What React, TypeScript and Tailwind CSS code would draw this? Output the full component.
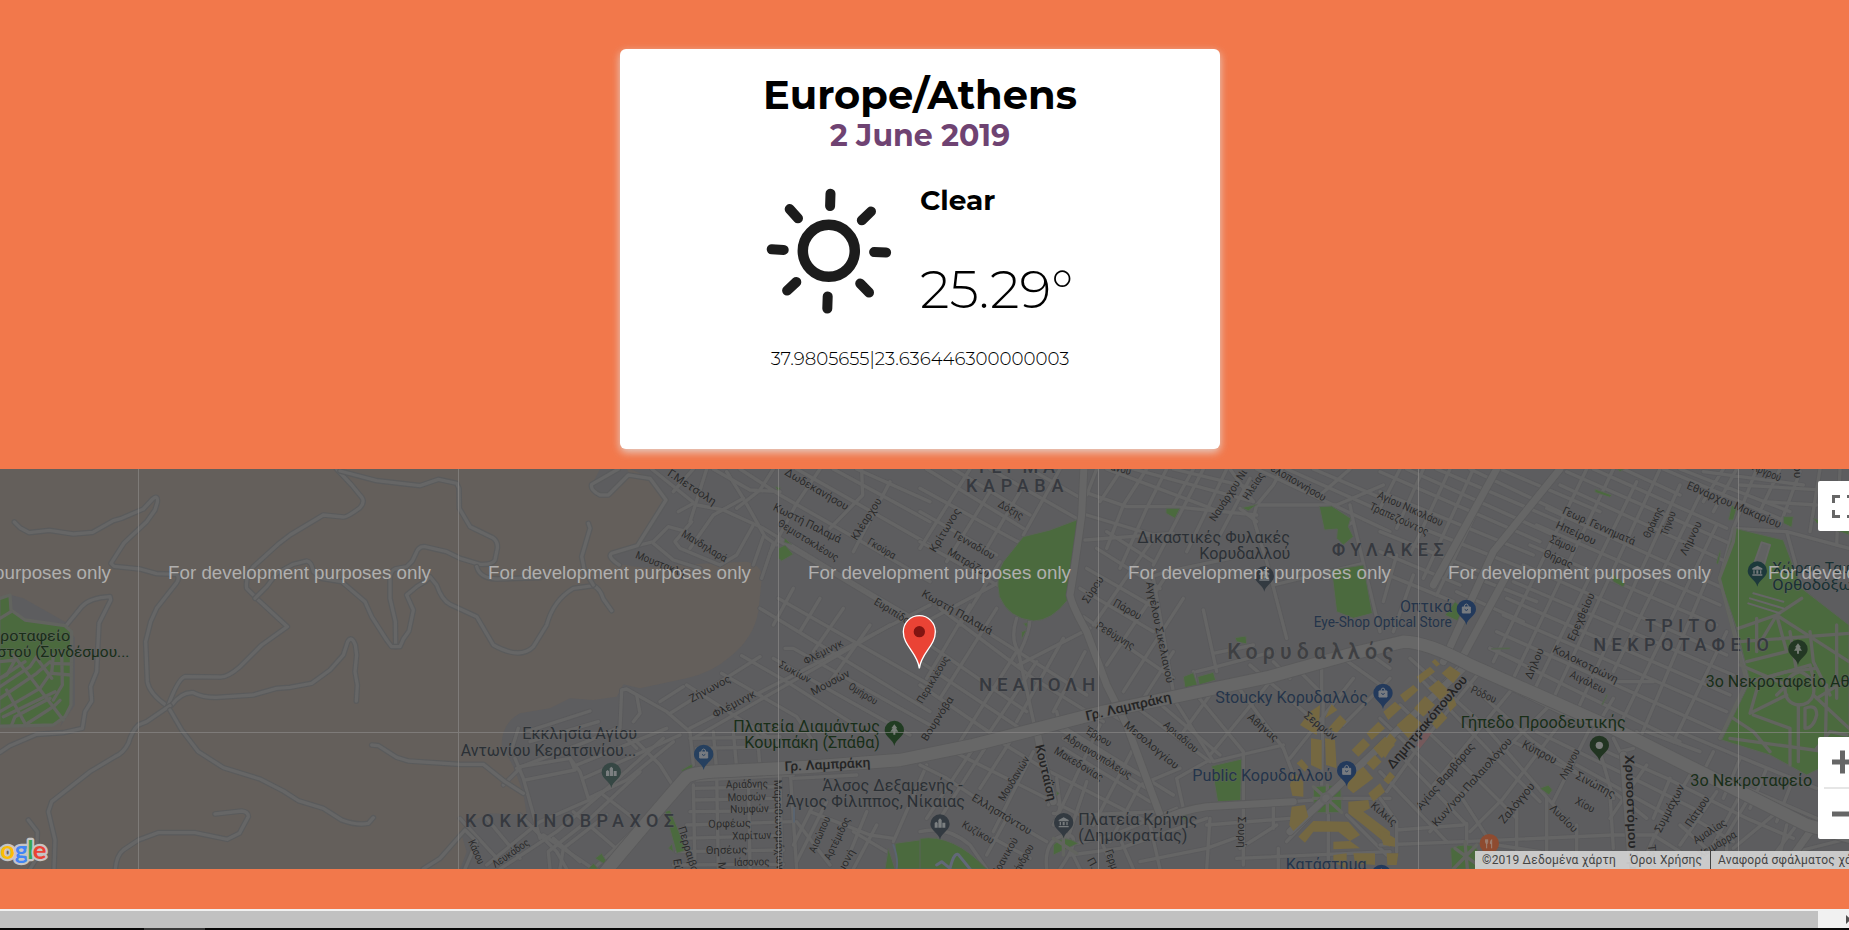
import React from "react";

type Label = [number, number, number, number, string, number?, string?, number?];

const STREET = "#2a2a2a";
const POI = "#2b3035";
const GREEN = "#182e18";
const BLUE = "#24344a";
const DISTRICT = "#36393f";

// Map drawing units are thirds of a CSS pixel; every sector has its own origin.
const sectors = [0, 1380, 2760, 4140];

const labels: Label[][] = [
  [
    [0, 527, 211, 527, "ροταφείο", 46, GREEN],
    [-8, 575, 388, 575, "στού (Συνδέσμου...", 46, GREEN],
  ],
  [
    [620, 30, 760, 122, "Γ.Μετσολη", 33],
    [972, 28, 1158, 137, "Δωδεκανήσου", 33],
    [937, 134, 1137, 235, "Κωστή Παλαμά", 34],
    [950, 180, 1128, 290, "Θεμιστοκλέους", 32],
    [1190, 228, 1266, 108, "Κλέαρχου", 33],
    [1220, 236, 1300, 283, "Γκούρα", 32],
    [662, 212, 793, 292, "Μανδηλαρά", 32],
    [524, 278, 670, 336, "Μουστακλή", 32],
    [1240, 416, 1355, 487, "Ευριπίδου", 32],
    [1382, 392, 1590, 510, "Κωστή Παλαμά", 33],
    [1037, 600, 1152, 540, "Φλέμινγκ", 31],
    [955, 605, 1045, 655, "Σωκίων", 31],
    [1060, 692, 1172, 632, "Μουσών", 33],
    [1163, 670, 1245, 720, "Ομήρου", 31],
    [695, 713, 815, 648, "Ζήνωνος", 33],
    [765, 760, 890, 693, "Φλέμινγκ", 33],
    [820, 800, 1260, 800, "Πλατεία Διαμάντως", 47, GREEN],
    [853, 850, 1260, 850, "Κουμπάκη (Σπάθα)", 47, GREEN],
    [974, 918, 1232, 906, "Γρ. Λαμπράκη", 40, "#242424", 500],
    [187, 823, 531, 823, "Εκκλησία Αγίου", 47, POI],
    [2, 873, 529, 873, "Αντωνίου Κερατσινίου...", 47, POI],
    [15, 1087, 642, 1087, "ΚΟΚΚΙΝΟΒΡΑΧΟΣ", 54, DISTRICT, 500],
    [798, 970, 924, 967, "Αριάδνης", 33],
    [803, 1009, 918, 1005, "Μουσών", 33],
    [811, 1044, 927, 1041, "Νυμφών", 33],
    [745, 1088, 873, 1085, "Ορφέως", 33],
    [817, 1124, 934, 1121, "Χαρίτων", 33],
    [738, 1167, 862, 1165, "Θησέως", 33],
    [822, 1203, 929, 1201, "Ιάσονος", 33],
    [942, 944, 950, 1215, "Μαραθωνομάχων", 33],
    [1087, 978, 1508, 978, "Άλσος Δεξαμενής -", 47, POI],
    [977, 1027, 1515, 1027, "Άγιος Φίλιππος, Νίκαιας", 47, POI],
    [24, 1130, 55, 1200, "Κάσου", 32],
    [106, 1210, 210, 1137, "Λευκάδος", 32],
    [654, 1088, 700, 1240, "Περραιβού", 33],
    [640, 1183, 648, 1240, "Εύβ", 33],
    [774, 1192, 778, 1250, "Μιλ", 33],
    [1065, 1166, 1112, 1060, "Αισώπου", 32],
    [1110, 1187, 1172, 1062, "Αρτέμιδος", 32],
    [1150, 1225, 1186, 1160, "μονή", 32],
    [1387, 718, 1469, 580, "Περικλέους", 31],
  ],
  [
    [168, 25, 405, 25, "ΤΕΡΜΑ", 54, DISTRICT, 500],
    [138, 80, 430, 80, "ΚΑΡΑΒΑ", 54, DISTRICT, 500],
    [232, 124, 303, 164, "Δόξης", 32],
    [46, 264, 123, 138, "Κρίτωνος", 33],
    [98, 216, 217, 284, "Γενναδίου", 32],
    [80, 266, 200, 338, "Ματρόζου", 32],
    [504, 417, 552, 342, "Σύρου", 33],
    [577, 420, 657, 465, "Πάρου", 33],
    [526, 488, 636, 555, "Ρεθύμνης", 33],
    [678, 352, 740, 656, "Αγγέλου Σικελιανού", 32],
    [20, 830, 102, 703, "Βουρνόβα", 32],
    [177, 677, 526, 677, "ΝΕΑΠΟΛΗ", 56, DISTRICT, 500],
    [500, 767, 756, 708, "Γρ. Λαμπράκη", 40, "#242424", 500],
    [610, 784, 765, 914, "Μεσολογγίου", 33],
    [728, 782, 824, 865, "Αρκαδίου", 31],
    [495, 803, 567, 846, "Έβρου", 32],
    [430, 822, 628, 943, "Αδριανουπόλεως", 33],
    [400, 863, 542, 950, "Μακεδονίας", 33],
    [345, 842, 385, 1010, "Κουταΐση", 38, "#242424", 500],
    [252, 1010, 330, 882, "Μουδανιών", 32],
    [153, 1004, 327, 1110, "Ελλησπόντου", 33],
    [123, 1085, 215, 1138, "Κυζίκου", 32],
    [475, 1080, 832, 1080, "Πλατεία Κρήνης", 47, POI],
    [475, 1129, 802, 1129, "(Δημοκρατίας)", 47, POI],
    [238, 1225, 295, 1125, "Ιρανικού", 32],
    [300, 1222, 342, 1145, "άνδρου", 32],
    [555, 1158, 580, 1230, "Γερμα", 33],
    [500, 1185, 530, 1240, "Π. Κ", 32],
    [885, 172, 983, 22, "Ναυάρχου Νι", 33],
    [985, 107, 1035, 30, "Ηλείας", 32],
    [570, 14, 630, 30, "άνου", 32],
    [1050, 16, 1210, 110, "ελοποννήσου", 33],
    [652, 235, 1110, 235, "Δικαστικές Φυλακές", 47, POI],
    [838, 283, 1111, 283, "Κορυδαλλού", 47, POI],
    [1235, 273, 1571, 273, "ΦΥΛΑΚΕΣ", 54, DISTRICT, 500],
    [1370, 98, 1563, 184, "Αγίου Νικολάου", 33],
    [1346, 132, 1520, 212, "Τραπεζούντος", 33],
    [922, 582, 1420, 582, "Κορυδαλλός", 64, "#3e3f42", 500],
    [1181, 485, 1595, 485, "Eye-Shop Optical Store", 42, BLUE],
    [886, 715, 1344, 715, "Stoucky Κορυδαλλός", 47, BLUE],
    [817, 947, 1238, 947, "Public Κορυδαλλού", 47, BLUE],
    [1097, 1214, 1340, 1214, "Κατάστημα", 47, BLUE],
    [980, 760, 1064, 832, "Αθήνας", 33],
    [1150, 755, 1240, 828, "Σερρών", 33],
    [1350, 1025, 1420, 1085, "Κιλκίς", 33],
    [955, 1055, 955, 1148, "Σουρή", 33],
  ],
  [
    [60, 441, 216, 441, "Οπτικά", 47, BLUE],
    [545, 145, 760, 241, "Γεωρ. Γεννηματά", 33],
    [525, 188, 642, 240, "Ηπείρου", 33],
    [507, 230, 582, 264, "Σάμου", 33],
    [488, 273, 573, 311, "Θήρας", 33],
    [808, 222, 850, 132, "Θράκης", 32],
    [862, 214, 888, 143, "Τήνου", 32],
    [918, 274, 966, 175, "Λήμνου", 33],
    [918, 70, 1198, 190, "Εθνάρχου Μακαρίου", 34],
    [1115, 14, 1198, 50, "Αργρού", 34],
    [1243, -12, 1243, 40, "ίου", 32],
    [582, 530, 645, 390, "Ερεχθείου", 33],
    [454, 645, 492, 555, "Δήλου", 33],
    [515, 560, 708, 655, "Κολοκοτρώνη", 33],
    [567, 636, 672, 686, "Αιγάλεω", 33],
    [795, 502, 1010, 502, "ΤΡΙΤΟ", 54, DISTRICT, 500],
    [640, 559, 1167, 559, "ΝΕΚΡΟΤΑΦΕΙΟ", 54, DISTRICT, 500],
    [1177, 324, 1470, 324, "Χώρος Ταφής", 45, "#183033"],
    [1177, 374, 1440, 374, "Ορθοδόξων", 45, "#183033"],
    [977, 665, 1436, 665, "3ο Νεκροταφείο Αθη", 47, GREEN],
    [931, 963, 1297, 963, "3ο Νεκροταφείο", 47, GREEN],
    [242, 789, 737, 789, "Γήπεδο Προοδευτικής", 47, GREEN],
    [38, 914, 264, 645, "Δημητρακόπουλου", 39, "#242424", 500],
    [270, 682, 343, 715, "Ρόδου", 33],
    [123, 1037, 286, 845, "Αγίας Βαρβάρας", 33],
    [170, 1087, 398, 830, "Κων/νου Παλαιολόγου", 33],
    [424, 846, 523, 898, "Κύπρου", 35],
    [556, 946, 600, 858, "Λήμνου", 32],
    [585, 940, 698, 1000, "Σινώπης", 35],
    [583, 1015, 637, 1044, "Χίου", 33],
    [373, 1078, 466, 965, "Ζαλόγγου", 35],
    [507, 1032, 580, 1104, "Λυσίου", 33],
    [735, 870, 748, 1215, "Χρυσοστόμου Σμ", 38, "#242424", 500],
    [842, 1105, 914, 965, "Συμμάχων", 33],
    [932, 1088, 990, 1002, "Πάτμου", 33],
    [948, 1138, 1042, 1078, "Αμαλίας", 33],
    [962, 1180, 1072, 1115, "Χειμάρρα", 33],
    [803, 1140, 810, 1210, "Τσεν", 33],
  ],
];

const hillRoads: string[] = [
  "M43 171 L60 188 L88 203 L148 196 L220 207 L278 202 L340 167 L365 160 L430 132 L458 102 Q475 88 472 112 L465 135 L440 170 L372 234 L333 295 L342 304 L420 312 L470 326 L530 328 Q540 338 530 353 L470 430 L452 470 L437 530 L442 650 Q448 685 500 722",
  "M1010 12 L1055 60 L1086 98 Q1095 112 1080 128 Q1040 158 1030 156 L970 150 L870 210 L835 237 L760 305 Q735 335 740 370 L775 405 L862 485 L785 540 L720 605 Q680 640 655 636 L555 635 Q535 640 505 720",
  "M1020 18 L1130 47 L1260 62 L1315 43 L1370 55 L1377 70 L1378 130 L1410 185 L1478 218 Q1498 232 1490 260 L1485 285 Q1478 300 1440 298 L1380 280 L1340 260 L1275 245 Q1255 243 1248 265 L1237 288 L1220 305 L1185 312 Q1172 318 1170 340 L1170 400 L1186 470 L1187 545",
  "M765 400 L800 365 L830 325 L880 298 L920 288 Q935 290 940 320 L965 340 L1025 350 L1095 410 L1115 455 L1160 525 L1175 545 L1200 545 L1210 522 L1227 498 L1240 435 L1220 390 L1250 365 L1275 350 L1290 335 L1310 360 Q1325 405 1350 418 L1430 455 L1480 540 Q1560 585 1600 545 L1640 480 Q1660 405 1720 370 L1780 362 Q1800 370 1810 402 L1835 437",
  "M515 720 Q545 680 580 683 Q610 698 650 697 L760 690 L830 670 L870 667 L935 655 L990 615 L1030 570 L1043 530 Q1055 510 1066 540 L1070 570 L1065 620 L1072 660 L1069 708",
  "M510 722 L440 770 L415 780 Q395 800 385 835 Q370 865 345 875 L270 920 L155 1010 L145 1040 L165 1125 L162 1212",
  "M510 735 L545 795 L595 860 L670 908 L780 942 L850 978 L895 1007 L970 1030 L1025 1065 Q1070 1082 1105 1075 L1120 1058",
  "M645 1047 L725 1038 Q745 1040 745 1055 L718 1105 L682 1123 L585 1103 L475 1103 L415 1125 L370 1155 Q350 1170 346 1212",
  "M1115 840 L1135 842 L1190 877 L1225 888 L1380 898 L1450 898 L1515 950 L1570 985",
  "M85 1065 L112 1100 L110 1180 L90 1212",
  "M200 480 L245 425 Q270 398 330 395 L332 405 L297 475 L290 620 L272 665 L275 708 L255 740 L247 790 L190 803 L110 808 L30 842 L0 862",
  "M1270 1212 L1320 1180 L1395 1095 L1430 1130 L1395 1212",
  "M1765 175 L1770 190 L1745 275 L1753 315 L1780 360",
  "M1430 305 Q1440 340 1490 342 L1620 338",
  "M1855 12 L1775 58 Q1770 75 1800 90 L1825 90 L1885 30 L1950 40 L1998 105 L1912 242 L1835 265 Q1820 275 1858 300",
];

const minorRoads: string[][] = [
  [],
  [
    "M575 12 L710 120 L790 135 L910 190 L1240 390 L1430 500",
    "M540 240 L580 230 L625 185 L680 200",
    "M580 235 L640 285 L720 310",
    "M655 140 L700 115 M695 170 L645 230 L660 250 L780 300 L830 270 L880 180",
    "M700 12 L640 80 M740 12 L690 170 M800 20 L850 100 L915 215 L950 240",
    "M850 100 L760 150 L690 250 M905 340 L940 235 M880 300 L910 215",
    "M840 12 L960 90 L1240 250 L1410 350 M760 12 L870 75 L960 80",
    "M940 12 L900 75 L830 130 M1205 12 L1208 90 L1110 190 M1080 12 L1010 115 L930 265",
    "M1010 12 L1410 240 M1120 12 L1410 170 M1190 12 L1410 110 M1290 50 L1180 260",
    "M960 230 L1410 500 M900 430 L1410 740 M955 400 L1410 660 M845 572 L980 650 L1200 790",
    "M785 625 L1010 755 L1060 830 M940 580 L1350 810 M975 550 L1000 550 L1410 780",
    "M480 790 L485 675 L500 672 L620 740 L690 800 L700 900",
    "M600 710 L670 665 M630 745 L900 575 M680 660 L960 840 M690 790 L1410 420",
    "M700 820 L1100 590 L1290 480 M520 770 L540 745 L530 690",
    "M1000 370 L940 480 M1080 400 L1020 500 M1150 430 L1060 560 M1230 480 L1110 650",
    "M200 800 L390 738 M150 870 L175 790 M210 830 L415 770 M170 910 L380 830 L470 790 L530 850",
    "M165 880 L190 940 L240 1120 M180 905 L330 880 L345 915 L195 945 M330 880 L360 920 L385 1000 L500 945 L640 830",
    "M350 900 L620 790 M370 940 L660 810 M500 800 L600 900 L650 980",
    "M80 1200 L240 1070 L400 1000 M430 990 L560 1090 M130 960 L180 910",
    "M0 1060 L120 1190 M80 1060 L180 1180 M180 1050 L290 1160 L320 1212 M250 1110 L400 1212 M340 1040 L480 1160",
    "M120 1212 L290 1100 L430 980 L610 820 M270 1212 L265 1160 L380 1070 L540 920 M300 1212 L310 1150 L440 1050",
    "M400 1212 L540 1080 L700 920 M360 1190 L280 1120",
    "M710 945 L1000 930 M705 970 L960 965 M700 1005 L960 1000 M690 1040 L960 1037 M680 1080 L1000 1070 M660 1120 L960 1112 M650 1160 L970 1155 M640 1200 L970 1198",
    "M770 930 L775 1212 M865 920 L870 1212 M990 910 L1010 1212 M700 960 L705 1212 M960 920 L965 1212",
    "M690 820 L960 815 M710 850 L960 845 M760 800 L770 920 M820 800 L830 910 M890 790 L900 905",
    "M1000 940 L1190 930 M1010 1070 L1110 1200 M1050 1040 L1230 1110 L1300 1120 M1220 1040 L1150 1212 M1250 1080 L1180 1212",
    "M1010 1190 L1100 1010 M1000 1140 L1060 1020 M1400 900 L1300 1130 M1180 1100 L1280 1160",
  ],
  [
    "M0 140 L230 270 M0 230 L240 365 M0 70 L330 250 M20 12 L310 190 M100 12 L330 150 M210 12 L470 160 M330 12 L475 95",
    "M150 12 L0 250 M210 80 L80 290 M300 80 L200 250 M420 12 L310 210 M0 480 L240 350 M240 290 L120 480",
    "M60 430 L340 640 L550 770 M0 520 L320 740 M0 590 L300 790 M0 660 L220 810 M120 450 L500 690",
    "M150 420 L20 640 M230 430 L60 700 M290 560 L120 830 M350 590 L210 800 M430 520 L290 770 M495 560 L400 740",
    "M290 460 Q270 520 295 560 L345 790 M330 460 Q330 500 300 560 M295 600 L510 490",
    "M490 455 L760 640 M480 370 L700 500 M500 310 L690 420 M530 250 L720 370 M560 200 L700 290",
    "M495 225 L760 205 M520 480 L700 220 M560 600 L740 330 M610 680 L790 400 M670 700 L760 560",
    "M490 80 L620 125 L760 125 L1010 150 M530 12 L500 90 M600 20 L540 110 M680 12 L610 120 L560 250",
    "M740 12 L680 130 L600 310 M820 12 L760 120 M850 12 L700 300 M920 12 L800 260 M990 40 L900 210",
    "M560 12 L900 140 M640 12 L1000 110 M760 12 L1000 70 M500 150 L700 210",
    "M1010 12 L1410 200 M1100 12 L1410 150 M1180 12 L1410 110 M930 12 L1000 110 M1085 12 L1060 60 L1010 120",
    "M1010 120 L1250 120 L1390 60 M1010 120 L1000 160 L1040 290 L1100 520 M960 130 L1010 170",
    "M1200 90 L1290 12 M1290 120 L1300 170 L1380 500 M1300 170 L1270 190 M1060 360 L1330 295",
    "M680 340 L740 320 L930 280 M850 435 L890 620 M880 565 L1000 540 M830 620 L890 605 L1060 560 M820 620 L830 670",
    "M700 340 L760 680 M990 600 L1210 790 M1060 590 L1110 640 M1130 610 L1210 690 M1270 580 L1410 680 M1340 560 L1410 610",
    "M1205 610 L1205 700 M1410 640 L1270 780 M1050 650 L870 870 M870 690 L790 800 M760 700 L880 890 L960 870 L1090 840",
    "M830 690 L970 860 L970 1200 M950 660 L1090 850 L1140 980 M1300 640 L1110 880",
    "M0 900 L80 940 L260 1060 L380 1130 M80 850 L480 1050 L720 1040 M240 830 L370 910 L700 1080",
    "M350 810 L360 860 L400 1000 M415 790 L660 930 M430 820 L680 970 M430 850 L690 1010 M410 740 L420 780 L760 990",
    "M560 740 L610 770 L660 900 L720 1050 M640 720 L870 890 M700 700 L900 870",
    "M270 830 L180 970 M220 810 L60 1060 M160 850 L20 1060 M340 860 L220 1100 M500 950 L440 1130 M540 780 L470 930 L400 1080",
    "M640 850 L520 1080 M780 910 L660 960 L570 1130 M860 890 L770 940 L790 1030",
    "M380 1212 Q370 1120 440 1110 Q490 1110 420 1212 M450 1140 L580 1110 L770 1030 M450 1170 L600 1150 L860 1060",
    "M480 1212 L430 1110 M580 1212 L540 1120 M640 1212 L600 1120 M720 1212 L690 1080 M870 1060 L860 1212 M970 1110 L860 1150 L660 1190",
    "M1075 1150 L1075 1212 M860 1080 L1110 1060 M960 1150 L1070 1080 M950 1180 L1410 1160 M1060 1010 L1060 1090",
    "M0 1100 Q80 1080 150 1140 L200 1212 M220 1120 L330 1180 M260 1060 L200 1170",
    "M385 1020 Q400 1000 420 1020 Q420 1050 400 1045 M410 940 L420 1020",
    "M1115 1010 L1180 1005 M1265 1000 L1410 1000 M1210 700 L1205 960 M1170 1055 L1100 1130 M1280 1050 L1400 1170 M1225 1050 L1225 1212",
  ],
  [
    "M0 20 L480 230 M80 12 L520 210 M170 12 L540 170 M270 12 L560 150 M360 12 L660 140 M0 80 L460 270",
    "M0 140 L430 310 M0 200 L300 320 M240 320 L470 410 M230 380 L430 470 M0 260 L240 360 M0 320 L220 410",
    "M60 12 L0 130 M130 12 L50 190 M210 12 L90 270 M280 12 L130 340 M350 12 L170 390 M50 270 L10 410 M100 330 L40 500",
    "M540 60 L1060 300 M560 20 L1060 240 M640 12 L1040 190 M730 12 L900 90 M500 130 L1030 370 M470 180 L1020 420",
    "M450 240 L1010 480 M430 300 L1040 570 M400 350 L1060 630 M380 400 L1050 690 M370 450 L1040 740 M350 500 L1020 800 M330 550 L900 830",
    "M620 12 L340 590 M700 12 L400 640 M770 50 L460 680 M840 12 L520 700 M900 60 L590 740 M960 90 L700 620 M1010 180 L720 780 M990 320 L780 820 M1040 500 L880 830",
    "M330 550 L420 590 M700 650 L820 650 M700 700 L640 800 M800 800 L960 860",
    "M850 12 L1220 170 M900 12 L1230 140 M970 20 L1270 60 M1030 12 L970 110 M1070 12 L1000 140 M1130 12 L1060 190 M1200 12 L1130 160 M1260 20 L1200 180",
    "M1320 12 L1290 200 M1380 12 L1370 240 M1080 60 L1407 80 M1150 110 L1310 120",
    "M1060 190 L1220 200 L1407 250 M1220 200 L1270 380 L1407 500 M1060 190 L1020 340 L1080 560 L1110 650 L1020 820",
    "M240 600 L0 860 M300 620 L120 840 L20 980 M390 680 L160 960 M510 720 L300 930 L150 1100 M560 750 L370 1000 L270 1100 M630 790 L520 1010",
    "M90 580 L320 790 L590 1100 M250 640 L460 830 L700 1000 M130 650 L330 860 L480 1010 M60 720 L290 940 L410 1060 M0 760 L240 990 L330 1130",
    "M370 660 L620 780 M400 830 L700 980 L800 1060 M470 800 L800 960 L960 1040 M590 900 L860 1050",
    "M0 920 L200 1130 M70 880 L260 1080 M0 1000 L50 1070 L50 1160 M50 1095 L250 1080 M0 1140 L250 1130 L700 1110 L820 1110",
    "M260 1075 L260 1150 M410 1020 L410 1200 M500 1000 L500 1200 M590 1080 L590 1200 M690 990 L700 1150 M660 860 L700 1000 M350 1140 L480 1160",
    "M680 860 L860 940 L1100 1060 L1240 1120 M800 900 L690 1060 M870 940 L820 1060 M930 930 L820 1120 L780 1212 M1010 980 L900 1140 M1080 990 L960 1212",
    "M900 1080 L990 1160 M940 1060 L1060 1130 M1100 1010 L1040 1110 L1040 1212 M1180 1050 L1060 1150 M1250 1080 L1150 1212",
    "M820 1110 L900 1160 M1220 1080 L1190 1212 M1407 1120 L1210 1170 M700 820 L720 860 L760 850 M770 800 L800 840",
    "M1110 790 L1300 870 M900 800 L1090 880 L1310 970 M940 900 L1310 1060 M1000 860 L950 960 M1080 880 L1030 1000 M1160 910 L1110 1030 M1240 940 L1190 1070",
  ],
];

const mainRoads = [
  "M1800 1240 Q1950 1060 2060 935 Q2090 920 2180 918 L2420 906 L2700 885 L2920 840 L3310 740 L3810 635 L4060 565 L4210 530 Q4280 530 4410 600 L4840 790 L5040 890 L5420 1080 L5547 1115",
];
const avenues = [
  "M3252 0 L3245 150 Q3225 300 3210 390 Q3215 420 3260 500 L3320 660 L3380 780 L3480 1050",
  "M3110 795 L3125 870 L3160 1010",
  "M4330 590 L4480 260 L4680 12",
  "M4380 590 L4520 330",
  "M4490 12 L4300 360",
  "M3475 1070 Q3540 1035 3620 1025 L3880 1010",
  "M4400 600 L3870 1100",
  "M4870 870 L4895 1212",
  "M5350 1212 L5430 1100 L5547 1060",
];

const parks: string[][] = [
  ["M0 400 L30 390 L33 435 L75 465 L195 482 L215 500 L213 720 L195 755 L160 780 L0 780Z"],
  [
    "M955 250 L975 240 L1000 268 L965 288 L955 280Z M975 220 L995 238 L972 232Z",
    "M665 915 L695 897 L700 912 L670 935Z",
    "M615 1040 L630 1035 L680 1155 L650 1165Z M625 1150 L637 1135 L640 1160Z M385 1212 L400 1195 L415 1212Z M405 1180 L425 1165 L440 1190 L430 1195Z",
    "M1275 1212 L1285 1150 L1305 1212Z M1305 1135 L1430 1118 L1580 1212 L1310 1212Z",
    "M945 65 L962 68 L955 78Z",
  ],
  [
    "M310 215 L390 195 L475 163 L455 330 L443 405 Q395 468 340 468 Q265 460 238 395 Q225 330 250 290Z",
    "M310 475 L323 473 L320 488Z M305 500 L320 495 L304 525Z",
    "M738 130 L780 130 L765 160 L738 145Z M965 128 L1012 118 L985 137Z",
    "M1198 125 L1235 123 L1292 160 L1285 185 L1300 215 L1270 240 L1250 220 L1252 192 L1213 195Z",
    "M1235 315 L1330 300 L1357 445 L1300 460 L1250 440Z",
    "M790 635 L820 623 L832 660 L795 668Z M833 635 L880 622 L887 645 L838 660Z M945 518 L978 513 L980 537 L950 530Z",
    "M875 903 L965 882 L962 1007 L893 1010Z",
    "M1180 965 L1262 960 L1265 1042 L1183 1043Z",
    "M400 1140 Q430 1105 475 1135 L400 1170Z M788 1043 L800 1045 L800 1070 L788 1060Z M0 1120 Q100 1105 200 1212 L0 1212Z",
    "M408 978 L418 985 L410 992Z M632 808 L640 806 L638 820Z",
  ],
  [
    "M645 72 L695 90 L690 97 L645 82Z M690 322 L735 355 L730 367 L700 350Z",
    "M1045 165 L1055 120 L1070 130 L1060 165Z M1210 155 L1240 155 L1235 187 L1210 175Z M1008 295 L1020 255 L1022 265 L1015 298Z",
    "M1065 190 L1210 225 L1265 370 L1407 480 L1407 870 L1300 920 L1280 930 L1170 870 L1025 825 L1110 650 L1070 490 L1018 340Z",
    "M1300 160 L1407 190 L1407 210 L1310 175Z",
    "M195 450 L225 410 L262 440 L255 478Z",
    "M480 970 L505 960 L517 975 L507 990Z",
    "M212 1150 Q260 1130 290 1150 L320 1212 L215 1212Z M710 12 L733 12 L720 20Z",
    "M335 550 L390 548 L390 552 L335 553Z M665 718 L680 688 L683 690 L668 720Z",
  ],
];

const parkPaths: string[][] = [
  [
    "M0 400 L30 390 L33 435 L75 465 L195 482 L215 500 L213 720 L195 755 L160 780 L0 784",
    "M0 460 L33 440 M0 665 L90 605 L110 575 M0 640 L75 590 M0 700 L110 625 L150 590 M0 740 L120 670 L155 620 M10 755 L165 680 M75 780 L160 725 L180 706 M35 780 L45 755 L150 700",
    "M40 570 L190 765 M20 675 L75 775 M110 580 L155 640 M185 560 L187 660 L160 705 M160 570 L155 625 L213 630 M155 595 L213 597 M0 590 L45 585 L20 630 L0 640",
  ],
  [],
  ["M1180 965 L1265 1042 M1262 960 L1183 1043 M1222 960 L1222 1043 M1180 1000 L1265 1000", "M400 1120 L470 1165 M430 1110 L430 1170"],
  [
    "M1065 190 L1060 230 L1018 340 L1100 650 L1020 820",
    "M1190 450 L1265 400 M1075 490 L1190 450 L1220 470 L1407 590 M1080 530 L1407 505 M1100 590 L1220 560 L1190 450 L1130 550 M1130 460 L1130 560",
    "M1230 500 L1250 620 M1290 500 L1300 590 L1350 690 M1150 640 L1290 600 L1300 640 M1080 600 L1220 660 L1190 690 M1220 690 L1110 745 L1140 640 M1120 750 L1230 790 L1230 900",
    "M1260 620 Q1310 640 1300 690 Q1290 720 1255 720 Q1215 715 1215 670 Q1220 630 1260 620Z",
    "M1255 720 L1255 890 M1275 730 Q1310 715 1310 750 Q1300 790 1275 790Z M1300 690 L1407 790 M1310 700 L1407 640 M1340 660 L1335 890 M1110 650 L1220 620 L1310 610",
    "M1050 820 L1407 870 M1060 760 L1120 800 L1170 860 M1370 480 L1370 700 M1310 850 L1350 800 L1400 810",
    "M225 1150 L310 1212 M290 1140 L220 1212 M255 1130 L262 1212",
  ],
];

const shops = [
  "M1170 740 L1200 720 L1198 765 L1190 810 L1140 780Z M1215 760 L1235 718 L1252 735Z M1225 790 L1260 750 L1280 770 L1250 805Z M1173 820 L1205 825 L1205 915 L1173 900Z M1215 820 L1245 825 L1250 910 L1218 900Z",
  "M1110 960 L1120 920 L1150 950 L1150 995 L1117 992Z M1130 895 L1145 882 L1165 905 L1155 920Z M1115 1025 L1155 1020 L1165 1055 L1120 1098 L1108 1080Z M1135 1115 L1180 1068 L1285 1070 L1320 1110 L1290 1128 L1255 1100 L1180 1100 L1155 1133Z",
  "M1285 1010 L1345 1005 L1350 1030 L1330 1040 L1410 1100 L1410 1145 L1330 1080 L1285 1045Z M1240 1130 L1290 1128 L1320 1150 L1240 1153Z M1240 1170 L1280 1165 L1280 1212 L1240 1190Z M1300 1165 L1365 1165 L1365 1200 L1305 1195Z",
  "M1295 855 L1330 820 L1350 840 L1315 875Z M1340 805 L1375 770 L1395 790 L1355 825Z M1285 940 L1330 905 L1360 940 L1300 985 L1283 970Z M1340 895 L1365 870 L1385 890 L1360 915Z M1360 850 L1395 815 L1425 840 L1385 880Z M1345 985 L1380 955 L1395 980 L1360 1010Z",
  "M1490 635 L1530 605 L1545 620 L1500 655Z M1535 590 L1545 582 L1560 597 L1550 605Z M1565 625 L1590 603 L1622 625 L1600 655Z M1440 690 L1480 660 L1495 675 L1455 712Z M1525 670 L1555 645 L1590 680 L1560 705Z M1482 730 L1515 693 L1545 720 L1510 755Z M1430 780 L1470 745 L1505 775 L1465 820Z M1390 740 L1425 710 L1445 728 L1405 765Z M1580 710 L1600 695 L1610 720 L1590 740Z M1535 775 L1565 740 L1582 758 L1550 793Z M1380 850 L1410 805 L1430 825 L1395 880Z M1390 945 L1410 920 L1425 935 L1405 958Z M1375 1090 L1425 1120 L1425 1145 L1390 1140Z M1400 1165 L1435 1165 L1430 1200 L1402 1200Z",
];

type Kind = "bag" | "city" | "tree" | "museum" | "dot" | "food";
const pins: [number, number, string, Kind][] = [
  [1834, 922, "#364744", "city"],
  [2111, 868, "#26405f", "bag"],
  [2683, 796, "#213c22", "tree"],
  [2820, 1077, "#333a41", "city"],
  [3191, 1073, "#333a41", "museum"],
  [3793, 333, "#333a41", "museum"],
  [4149, 685, "#233a5c", "bag"],
  [4040, 917, "#233a5c", "bag"],
  [4144, 1228, "#233a5c", "bag"],
  [4399, 433, "#233a5c", "bag"],
  [5272, 318, "#1d393b", "museum"],
  [5394, 553, "#233824", "tree"],
  [4798, 841, "#223522", "dot"],
  [4468, 1136, "#8e4b30", "food"],
];

function Pin({ x, y, color, kind }: { x: number; y: number; color: string; kind: Kind }) {
  return (
    <g transform={`translate(${x} ${y})`}>
      <path
        d={kind === "food" ? "M-29 0 A29 29 0 1 1 29 0 A29 29 0 1 1 -29 0Z" : "M0 47 C-4 26 -29 20 -29 0 A29 29 0 1 1 29 0 C29 20 4 26 0 47Z"}
        fill={color}
      />
      {kind === "bag" && (
        <g fill="none" stroke="#777b80" strokeWidth="3">
          <path d="M-12 -7 H12 V11 H-12Z" fill="#777b80" />
          <path d="M-6 -7 Q-6 -16 0 -16 Q6 -16 6 -7" />
          <path d="M-5 0 Q0 7 5 0" stroke={color} />
        </g>
      )}
      {kind === "city" && <path d="M-16 11 V-3 L-11 -7 L-7 -3 V11Z M-5 11 V-12 L0 -17 L5 -12 V11Z M7 11 V-4 H16 V11Z" fill="#7b7f80" />}
      {kind === "tree" && <path d="M0 -18 L9 -6 H5 L12 4 H3 V13 H-3 V4 H-12 L-5 -6 H-9Z" fill="#777d77" />}
      {kind === "museum" && (
        <path d="M-15 -8 L0 -16 L15 -8 V-4 H-15Z M-12 -2 H-8 V8 H-12Z M-3 -2 H3 V8 H-3Z M8 -2 H12 V8 H8Z M-15 10 H15 V14 H-15Z" fill="#777b7d" />
      )}
      {kind === "dot" && <circle r="11" fill="#7a7d7a" />}
      {kind === "food" && <path d="M-11 -13 V-3 Q-11 0 -8 0 V14 M-5 -13 V-3 Q-5 0 -8 0 V-13 M7 14 V-12 Q2 -8 3 0 H7" fill="none" stroke="#9e8478" strokeWidth="3" />}
    </g>
  );
}

function StreetLabel({ item }: { item: Label }) {
  const [x1, y1, x2, y2, text, size = 33, fill = STREET, weight = 400] = item;
  const length = Math.hypot(x2 - x1, y2 - y1);
  const angle = (Math.atan2(y2 - y1, x2 - x1) * 180) / Math.PI;
  const spaced = fill === DISTRICT || size === 64;
  return (
    <text
      transform={`translate(${x1} ${y1}) rotate(${angle})`}
      fontSize={size}
      fontWeight={weight}
      fill={fill}
      stroke="#626263"
      strokeOpacity="0.6"
      strokeWidth="4"
      strokeLinejoin="round"
      paintOrder="stroke"
      textLength={length}
      lengthAdjust={spaced ? "spacing" : "spacingAndGlyphs"}
    >
      {text}
    </text>
  );
}

function MapDrawing() {
  return (
    <svg className="block h-[400px] w-[1849px]" viewBox="0 12 5547 1200" fontFamily="Roboto, 'Noto Sans', sans-serif">
      <rect y="12" width="5547" height="1200" fill="#645f5b" />
      <path
        d="M1890 12 L1955 40 L1998 105 L1915 240 L1830 265 L1860 298 L1930 308 L2070 298 L2240 290 Q2290 300 2285 345 L2275 440 Q2260 520 2190 575 Q2140 620 2060 640 L1920 670 L1870 658 L1850 695 L1780 705 L1710 700 L1650 730 L1560 745 Q1505 775 1505 840 L1540 905 L1570 985 L1580 1050 L1470 1045 L1400 1075 L1385 1110 L1400 1160 L1380 1212 L5547 1212 L5547 12Z"
        fill="#5d5d5f"
      />
      <path d="M33 390 L70 400 L195 470 L225 520 L225 720 L180 785 L213 700 L210 500 L75 465 L33 435Z" fill="#5d5d5f" />
      <path d="M1800 12 L1775 60 L1810 92 L1830 88 L1890 28 L1880 12Z" fill="#5d5d5f" />

      <g fill="none" strokeLinecap="round" strokeLinejoin="round">
        {sectors.map((offset, i) => (
          <g key={offset} transform={`translate(${offset} 0)`}>
            {minorRoads[i].map((d) => (
              <path key={d} d={d} stroke="#5a5a5c" strokeWidth="15" />
            ))}
            {minorRoads[i].map((d) => (
              <path key={`${d}f`} d={d} stroke="#656565" strokeWidth="10" />
            ))}
          </g>
        ))}
      </g>

      {sectors.map((offset, i) => (
        <g key={offset} transform={`translate(${offset} 0)`}>
          {parks[i].map((d) => (
            <path key={d} d={d} fill="#4b6a3e" stroke="#5b6259" strokeWidth="3" />
          ))}
        </g>
      ))}

      <g fill="none" strokeLinecap="round" strokeLinejoin="round">
        {hillRoads.map((d) => (
          <g key={d}>
            <path d={d} stroke="#5a5b5c" strokeWidth="17" />
            <path d={d} stroke="#666666" strokeWidth="10" />
          </g>
        ))}
        {sectors.map((offset, i) => (
          <g key={offset} transform={`translate(${offset} 0)`}>
            {parkPaths[i].map((d) => (
              <path key={d} d={d} stroke="#62645f" strokeWidth="10" />
            ))}
          </g>
        ))}
        {avenues.map((d) => (
          <g key={d}>
            <path d={d} stroke="#5a5a5b" strokeWidth="26" />
            <path d={d} stroke="#666666" strokeWidth="21" />
          </g>
        ))}
        {mainRoads.map((d) => (
          <g key={d}>
            <path d={d} stroke="#5a5a5b" strokeWidth="42" />
            <path d={d} stroke="#676767" strokeWidth="37" />
          </g>
        ))}
        <circle cx="3978" cy="1000" r="15" stroke="#626262" strokeWidth="7" />
        <path d="M2810 1200 L2825 1190 L2850 1210 Q2865 1150 2880 1175 L2910 1212" stroke="#626878" strokeWidth="9" />
        <path d="M2680 1140 Q2695 1180 2690 1212 M2382 1020 V1070" stroke="#5a6470" strokeWidth="6" />
        <path d="M5285 232 L5250 330 L5280 340 L5310 240Z M5250 400 L5350 430 M5245 415 L5340 445 M5260 385 L5350 410" stroke="#666" strokeWidth="6" fill="#616262" />
      </g>

      <g transform="translate(2760 0)" fill="#756841">
        {shops.map((d) => (
          <path key={d} d={d} />
        ))}
        <path d="M1490 840 L1510 805 L1535 803 L1520 825 L1500 850Z" fill="#75595b" />
      </g>

      {pins.map(([x, y, color, kind]) => (
        <Pin key={`${x}-${y}`} x={x} y={y} color={color} kind={kind} />
      ))}
      {sectors.map((offset, i) => (
        <g key={offset} transform={`translate(${offset} 0)`}>
          {labels[i].map((item) => (
            <StreetLabel key={`${item[0]}-${item[1]}-${item[4]}`} item={item} />
          ))}
        </g>
      ))}

      <g fill="#8c8a89" opacity="0.65">
        {[415, 1375, 2335, 3295, 4255, 5215].map((x) => (
          <rect key={x} x={x - 1} y="12" width="3" height="1200" />
        ))}
        <rect x="0" y="801" width="5547" height="3" />
      </g>
      <g fill="#b0afae" fontFamily="'Liberation Sans', Arial, sans-serif" fontSize="56">
        {[-456, 504, 1464, 2424, 3384, 4344, 5304].map((x) => (
          <text key={x} x={x} y="343" textLength="789" lengthAdjust="spacingAndGlyphs">
            For development purposes only
          </text>
        ))}
      </g>

      <g transform="translate(2758 500)">
        <path d="M0 110 C-6 62 -48 44 -48 0 A48 48 0 1 1 48 0 C48 44 6 62 0 110Z" fill="#ea4335" stroke="#fff" strokeWidth="4" />
        <circle r="17" fill="#811411" />
      </g>

      <g
        fontFamily="Lato, 'Open Sans', sans-serif"
        fontSize="77"
        fontWeight="700"
        stroke="#c6c5c4"
        strokeWidth="13"
        strokeLinejoin="round"
        paintOrder="stroke"
      >
        <text y="1182">
          <tspan x="-96" fill="#4285f4">G</tspan>
          <tspan x="-42" fill="#ea4335">o</tspan>
          <tspan x="1" fill="#fbbc05">o</tspan>
          <tspan x="44" fill="#4285f4">g</tspan>
          <tspan x="82" fill="#34a853">l</tspan>
          <tspan x="98" fill="#ea4335">e</tspan>
        </text>
      </g>
    </svg>
  );
}

function SunIcon() {
  return (
    <svg className="h-[126px] w-[126px] shrink-0" viewBox="766.5 188.5 126 126" fill="none" stroke="#1c1c1c" strokeLinecap="round">
      <circle cx="829.3" cy="251.3" r="26" strokeWidth="10.5" />
      <path
        d="M831 194.2 L830.6 206.5 M828.2 296.9 L827.8 309 M772.2 249.8 L784.2 250.4 M874.6 252.6 L886.6 253 M790.2 209.6 L798.5 218.8 M862.3 220.8 L871.5 212 M787.6 291.1 L796.8 282.5 M860.7 284 L869.5 293.1"
        strokeWidth="10"
      />
    </svg>
  );
}

function WeatherCard() {
  return (
    <section className="flex h-[400px] w-[600px] flex-col items-center rounded-[6px] bg-white pt-[23px] font-['Montserrat','Inter',sans-serif] text-black shadow-[0_3px_8px_0_rgba(225,225,225,0.85)]">
      <h1 className="text-[40px] leading-[46px] font-bold whitespace-nowrap">Europe/Athens</h1>
      <h2 className="text-[30px] leading-[36px] font-bold whitespace-nowrap text-[#6f4372]">2 June 2019</h2>
      <div className="mt-[34px] flex w-[308px] gap-7">
        <SunIcon />
        <div className="flex flex-col">
          <p className="text-[28px] leading-[25px] font-bold">Clear</p>
          <p className="mt-[44px] text-[52.5px] leading-[64px] font-light whitespace-nowrap">25.29°</p>
        </div>
      </div>
      <p className="mt-[26px] text-[18.2px] leading-[24px] font-light whitespace-nowrap">37.9805655|23.636446300000003</p>
    </section>
  );
}

function MapPanel() {
  return (
    <section className="relative h-[400px] w-full overflow-hidden">
      <MapDrawing />
      <button aria-label="Fullscreen" className="absolute top-[12px] left-[1818px] flex h-[50px] w-[50px] items-center justify-center rounded-[2px] bg-white">
        <svg className="h-[23px] w-[23px]" viewBox="0 0 23 23" fill="none" stroke="#666" strokeWidth="3">
          <path d="M1.5 8 V1.5 H8 M15 1.5 H21.5 V8 M21.5 15 V21.5 H15 M8 21.5 H1.5 V15" />
        </svg>
      </button>
      <div className="absolute top-[268px] left-[1818px] flex h-[102px] w-[50px] flex-col items-center rounded-[2px] bg-white">
        <svg className="h-[50px] w-[50px]" viewBox="0 0 50 50" stroke="#666" strokeWidth="5">
          <path d="M14 25 H37 M24.5 13.5 V36.5" />
        </svg>
        <div className="h-[2px] w-[38px] bg-[#e6e6e6]" />
        <svg className="h-[50px] w-[50px]" viewBox="0 0 50 50" stroke="#666" strokeWidth="5">
          <path d="M14 25 H37" />
        </svg>
      </div>
      <div className="absolute bottom-0 left-[1475px] flex h-[18px] w-[420px] items-center bg-[#d6d6d6]/90 font-['Roboto','Noto_Sans',sans-serif] text-[12px] leading-[18px] tracking-[0.2px] whitespace-nowrap text-[#444]">
        <span className="w-[148px] pl-[7px]">©2019 Δεδομένα χάρτη</span>
        <span className="w-[87px] pl-[7px]">Όροι Χρήσης</span>
        <span className="h-[18px] border-l border-[#444] pl-[7px]">Αναφορά σφάλματος χάρτη</span>
      </div>
    </section>
  );
}

export default function App() {
  return (
    <main className="flex h-[930px] w-[1849px] flex-col overflow-hidden bg-[#f2784b]">
      <div className="flex h-[469px] shrink-0 justify-center pt-[49px] pr-[9px]">
        <WeatherCard />
      </div>
      <MapPanel />
      <div className="h-[40px] shrink-0" />
      <div className="flex h-[19px] shrink-0 bg-[#f1f1f1] pt-[2px]">
        <div className="h-[17px] w-[1818px] bg-[#c1c1c1]" />
        <svg className="ml-[28px] h-[17px] w-[3px]" viewBox="0 0 3 17">
          <path d="M0 4 L5 8.5 L0 13Z" fill="#505050" />
        </svg>
      </div>
      <div className="h-[2px] shrink-0 bg-[#080808] pl-[144px]">
        <div className="h-[2px] w-[61px] bg-[#393939]" />
      </div>
    </main>
  );
}
